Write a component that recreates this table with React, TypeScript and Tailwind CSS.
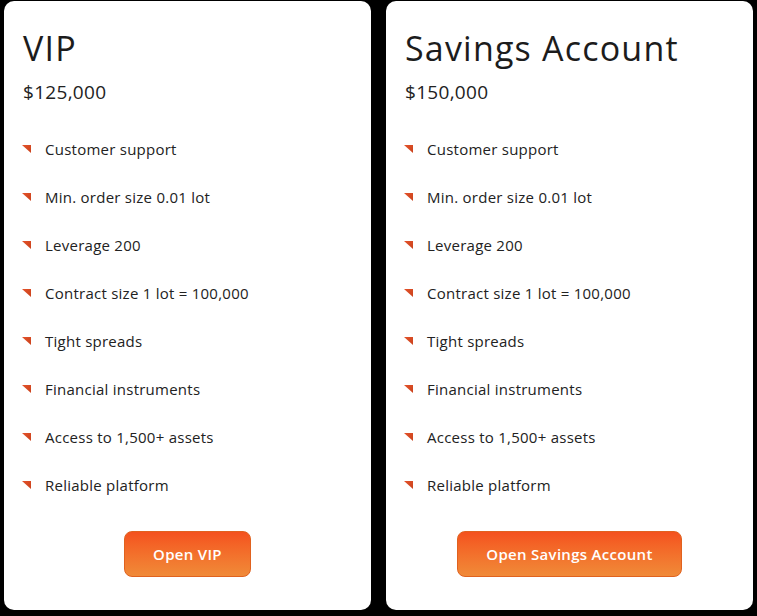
const features = [
  "Customer support",
  "Min. order size 0.01 lot",
  "Leverage 200",
  "Contract size 1 lot = 100,000",
  "Tight spreads",
  "Financial instruments",
  "Access to 1,500+ assets",
  "Reliable platform",
];

const plans = [
  { name: "VIP", price: "$125,000", cta: "Open VIP" },
  { name: "Savings Account", price: "$150,000", cta: "Open Savings Account" },
];

function Marker() {
  return (
    <svg width="9" height="8" viewBox="0 0 9 8" className="shrink-0">
      <defs>
        <linearGradient id="mk" x1="0" y1="0" x2="1" y2="1">
          <stop offset="0" stopColor="#e4522a" />
          <stop offset="1" stopColor="#c9421c" />
        </linearGradient>
      </defs>
      <polygon points="0,0 9,0 9,8" fill="url(#mk)" />
    </svg>
  );
}

export default function App() {
  return (
    <div
      className="w-[757px] h-[616px] bg-black flex gap-[15px] pl-[4px] pt-[1px]"
      style={{ fontFamily: "'Open Sans', sans-serif" }}
    >
      {plans.map((p) => (
        <div key={p.name} className="w-[367px] h-[609px] bg-white rounded-[10px] pl-[19px] pt-[26px] flex flex-col">
          <h2 className="text-[34px] leading-[42px] tracking-[1.2px] text-[#1c1c1c]">{p.name}</h2>
          <p className="mt-[11px] text-[19px] leading-[24px] tracking-[0.3px] text-[#222]">{p.price}</p>
          <ul className="mt-[34px] flex flex-col gap-[26px]">
            {features.map((f) => (
              <li key={f} className="flex items-center gap-[14px] h-[22px] -ml-[1px]">
                <Marker />
                <span className="text-[15px] tracking-[0.25px] text-[#222]">{f}</span>
              </li>
            ))}
          </ul>
          <div className="flex justify-center pr-[19px] mt-[35px]">
            <button className="h-[46px] px-[28px] rounded-[8px] border border-[#e0621f] text-white text-[15px] font-semibold tracking-[0.3px] bg-gradient-to-b from-[#f4511e] to-[#f08a38]">
              {p.cta}
            </button>
          </div>
        </div>
      ))}
    </div>
  );
}
